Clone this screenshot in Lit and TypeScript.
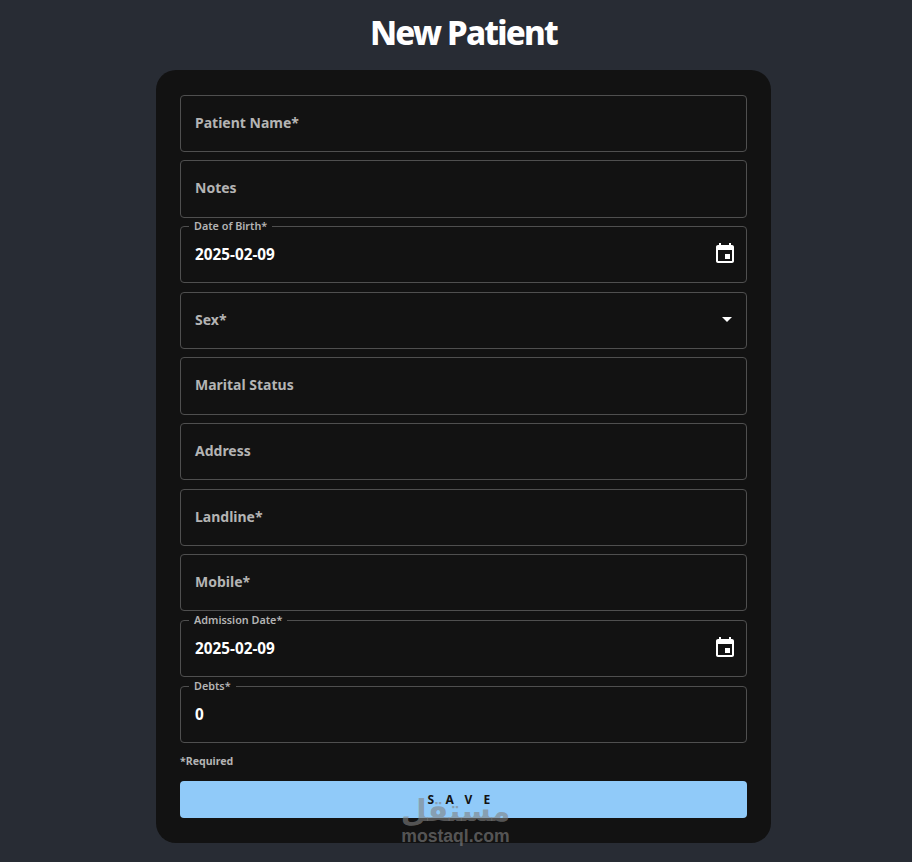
import { LitElement, html, css, svg } from "lit";
import { customElement } from "lit/decorators.js";

type Field = {
  label: string;
  value?: string;
  icon?: "date" | "select";
};

const FIELDS: Field[] = [
  { label: "Patient Name*" },
  { label: "Notes" },
  { label: "Date of Birth*", value: "2025-02-09", icon: "date" },
  { label: "Sex*", icon: "select" },
  { label: "Marital Status" },
  { label: "Address" },
  { label: "Landline*" },
  { label: "Mobile*" },
  { label: "Admission Date*", value: "2025-02-09", icon: "date" },
  { label: "Debts*", value: "0" },
];

const calendarIcon = svg`<path fill="currentColor" d="M17 12h-5v5h5v-5zM16 1v2H8V1H6v2H5c-1.11 0-1.99.9-1.99 2L3 19c0 1.1.89 2 2 2h14c1.1 0 2-.9 2-2V5c0-1.1-.9-2-2-2h-1V1h-2zm3 18H5V8h14v11z"/>`;
const caretIcon = svg`<path fill="currentColor" d="M7 10l5 5 5-5z"/>`;

@customElement("app-root")
export class AppRoot extends LitElement {
  static styles = css`
    :host {
      display: block;
      position: relative;
      height: 862px;
      overflow: hidden;
      background: #282c34;
      font-family: "Noto Sans", "Open Sans", sans-serif;
      color: #fff;
    }
    .page {
      display: flex;
      flex-direction: column;
      align-items: center;
      padding-left: 15px;
    }
    h1 {
      margin: 0;
      height: 70px;
      line-height: 65px;
      font-size: 33px;
      font-weight: 800;
      letter-spacing: -1.75px;
    }
    .card {
      box-sizing: border-box;
      width: 615px;
      height: 773px;
      padding: 24.6px 24px 0;
      background: #121212;
      border-radius: 20px;
      display: flex;
      flex-direction: column;
    }
    .fields {
      display: flex;
      flex-direction: column;
      gap: 8.37px;
    }
    .field {
      position: relative;
      box-sizing: border-box;
      height: 57.3px;
      padding: 0 14px 2px;
      display: flex;
      align-items: center;
      justify-content: space-between;
      border: 1px solid #4f4f4f;
      border-radius: 4px;
      font-size: 14px;
      font-weight: 700;
    }
    .field.filled {
      padding-bottom: 1px;
    }
    .placeholder {
      color: #b4b4b4;
    }
    .value {
      color: #fff;
      font-size: 15.3px;
    }
    .float {
      position: absolute;
      top: -8px;
      left: 8px;
      padding: 0 5px;
      background: #121212;
      color: #b4b4b4;
      font-size: 10.8px;
      font-weight: 600;
      line-height: 13px;
    }
    .icon {
      display: block;
      width: 24px;
      height: 24px;
      margin-right: -5px;
      color: #fff;
    }
    .icon.select {
      margin-right: -7px;
    }
    .note {
      margin: 11px 0 0;
      height: 27px;
      color: #b4b4b4;
      font-size: 10.6px;
      font-weight: 700;
      line-height: 14px;
    }
    button {
      height: 37px;
      padding: 0 0 0 2px;
      border: 0;
      border-radius: 4px;
      background: #90caf9;
      color: #121212;
      font-family: inherit;
      font-size: 12px;
      font-weight: 700;
      letter-spacing: 11.2px;
    }
    .watermark {
      position: absolute;
      left: 395px;
      top: 792px;
      width: 121px;
      text-align: center;
      color: rgba(130, 130, 130, 0.62);
      font-family: "Liberation Sans", sans-serif;
      font-weight: 700;
      pointer-events: none;
    }
    .watermark .ar {
      font-family: "DejaVu Sans", sans-serif;
      font-size: 30px;
      line-height: 38px;
      height: 36px;
      white-space: nowrap;
    }
    .watermark .en {
      font-size: 17.6px;
      line-height: 16px;
    }
  `;

  renderField(field: Field) {
    return html`
      <div class="field ${field.value ? "filled" : ""}">
        ${field.value
          ? html`<span class="float">${field.label}</span>
              <span class="value">${field.value}</span>`
          : html`<span class="placeholder">${field.label}</span>`}
        ${field.icon
          ? html`<svg class="icon ${field.icon}" viewBox="0 0 24 24">
              ${field.icon === "date" ? calendarIcon : caretIcon}
            </svg>`
          : null}
      </div>
    `;
  }

  render() {
    return html`
      <div class="page">
        <h1>New Patient</h1>
        <div class="card">
          <div class="fields">${FIELDS.map((f) => this.renderField(f))}</div>
          <p class="note">*Required</p>
          <button>SAVE</button>
        </div>
      </div>
      <div class="watermark">
        <div class="ar">مستقل</div>
        <div class="en">mostaql.com</div>
      </div>
    `;
  }
}
